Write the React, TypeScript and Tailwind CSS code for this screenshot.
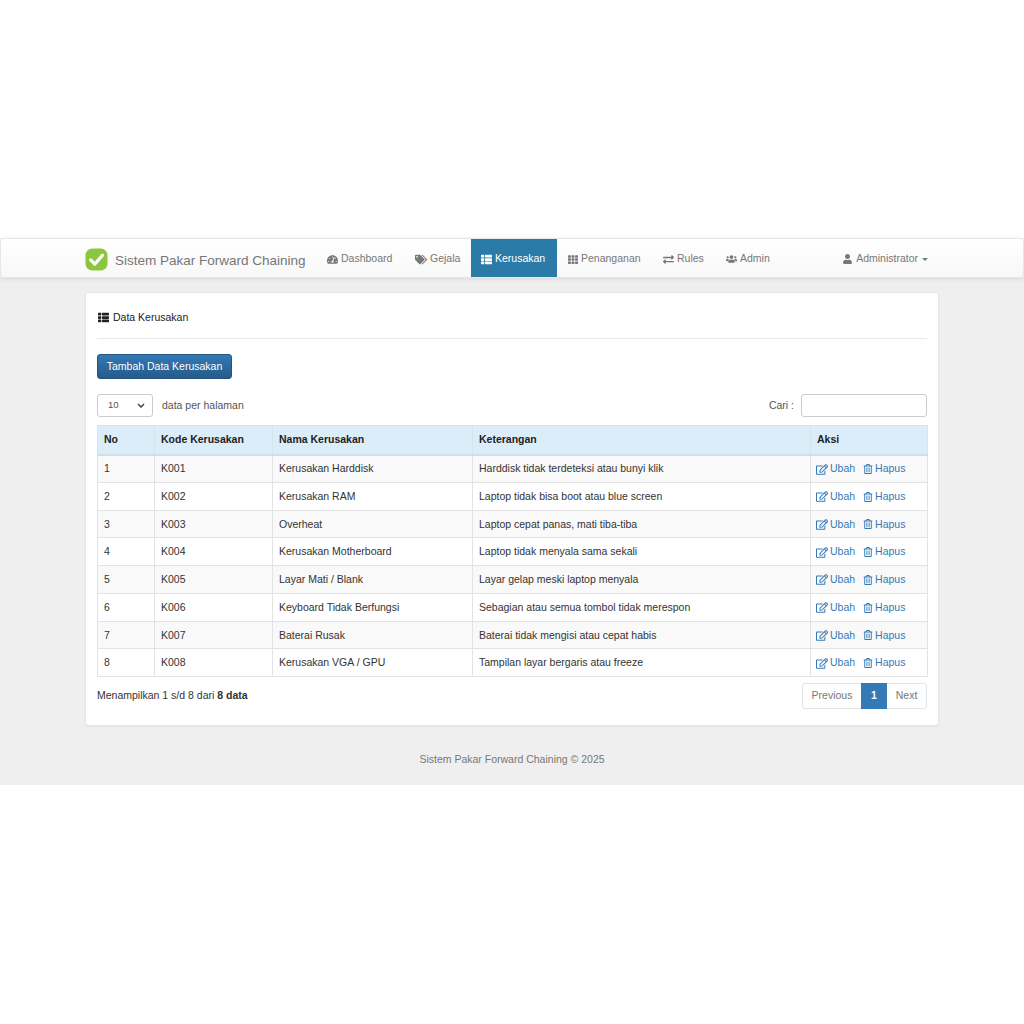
import { FaTachometerAlt, FaTags, FaThList, FaTh, FaExchangeAlt, FaUsers, FaUser, FaRegEdit, FaRegTrashAlt } from "react-icons/fa";
import type { IconType } from "react-icons";

const NAV: { label: string; icon: IconType; active?: boolean; w: string; iconSize: string; pad: string }[] = [
  { label: "Dashboard", icon: FaTachometerAlt, w: "w-[88px]", iconSize: "w-[11px] h-[11px]", pad: "pl-[11px]" },
  { label: "Gejala", icon: FaTags, w: "w-[67px]", iconSize: "w-[12px] h-[11px]", pad: "pl-[11px]" },
  { label: "Kerusakan", icon: FaThList, active: true, w: "w-[86px]", iconSize: "w-[11px] h-[11px]", pad: "pl-[10px]" },
  { label: "Penanganan", icon: FaTh, w: "w-[95px]", iconSize: "w-[10px] h-[11px]", pad: "pl-[11px]" },
  { label: "Rules", icon: FaExchangeAlt, w: "w-[63px]", iconSize: "w-[11px] h-[11px]", pad: "pl-[11px]" },
  { label: "Admin", icon: FaUsers, w: "w-[67px]", iconSize: "w-[11px] h-[12px]", pad: "pl-[11px]" },
];

const ROWS = [
  ["K001", "Kerusakan Harddisk", "Harddisk tidak terdeteksi atau bunyi klik"],
  ["K002", "Kerusakan RAM", "Laptop tidak bisa boot atau blue screen"],
  ["K003", "Overheat", "Laptop cepat panas, mati tiba-tiba"],
  ["K004", "Kerusakan Motherboard", "Laptop tidak menyala sama sekali"],
  ["K005", "Layar Mati / Blank", "Layar gelap meski laptop menyala"],
  ["K006", "Keyboard Tidak Berfungsi", "Sebagian atau semua tombol tidak merespon"],
  ["K007", "Baterai Rusak", "Baterai tidak mengisi atau cepat habis"],
  ["K008", "Kerusakan VGA / GPU", "Tampilan layar bergaris atau freeze"],
];

function Logo() {
  return (
    <svg width="23" height="23" viewBox="0 0 24 24" className="shrink-0 mt-[3px]">
      <rect x="0.5" y="0.5" width="23" height="23" rx="7" fill="#8cc63f" />
      <path d="M6 12.5l4.2 4.3L18.2 7.5" fill="none" stroke="#fff" strokeWidth="3.4" strokeLinecap="round" strokeLinejoin="round" />
    </svg>
  );
}

export default function App() {
  return (
    <div className="font-['Liberation_Sans',Arial,sans-serif] text-[10.5px] text-[#333] bg-white min-h-[1024px] pt-[238px]">
      <div className="bg-[#efefef] h-[547px]">
        <nav className="h-[40px] border border-[#e7e7e7] rounded-[3px] bg-gradient-to-b from-white to-[#f8f8f8] shadow-[0_1px_4px_rgba(0,0,0,0.1)] flex pl-[84px] pr-[85px]">
          <div className="flex items-center gap-[7px] w-[231px] shrink-0">
            <Logo />
            <span className="text-[13.5px] text-[#777] whitespace-nowrap pt-[6px]">Sistem Pakar Forward Chaining</span>
          </div>
          <div className="flex flex-1">
            {NAV.map((n) => {
              const Icon = n.icon;
              return (
                <div
                  key={n.label}
                  className={`${n.w} ${n.pad} flex items-center justify-start gap-[3px] pt-[2px] whitespace-nowrap ${
                    n.active ? "bg-[#2a7ba8] text-white" : "text-[#777]"
                  }`}
                >
                  <Icon className={`${n.iconSize} shrink-0`} />
                  {n.label}
                </div>
              );
            })}
            <div className="ml-auto mr-[10px] flex items-center gap-[3px] pt-[2px] text-[#777]">
              <FaUser className="w-[9px] h-[10px]" />
              <span className="ml-[1px] mr-[1px]">Administrator</span>
              <span className="w-0 h-0 border-x-[3.5px] border-x-transparent border-t-[3.5px] border-t-[#777]" />
            </div>
          </div>
        </nav>

        <main className="mx-[85px] mt-[14px] h-[434px] bg-white rounded-[4px] border border-[#e8e8e8] shadow-[0_1px_2px_rgba(0,0,0,0.06)] px-[11px]">
          <div className="h-[46px] border-b border-[#e8e8e8] flex items-center gap-[4px] pl-[1px] pt-[4px] text-[#222]">
            <FaThList className="w-[11px] h-[11px]" />
            Data Kerusakan
          </div>
          <button className="mt-[15px] h-[25px] w-[135px] rounded-[3px] border border-[#245580] bg-gradient-to-b from-[#337ab7] to-[#265a88] text-white text-[10.5px] block">
            Tambah Data Kerusakan
          </button>
          <div className="mt-[14px] flex items-center justify-between h-[24px]">
            <div className="flex items-center gap-[9px]">
              <div className="w-[56px] h-[23px] border border-[#ccc] rounded-[3px] bg-white flex items-center justify-between pl-[10px] pr-[7px] text-[9.5px] text-[#555]">
                10
                <svg width="8" height="5" viewBox="0 0 8 5"><path d="M1 1l3 3 3-3" fill="none" stroke="#444" strokeWidth="1.5" /></svg>
              </div>
              <span className="text-[#555] pt-[2px]">data per halaman</span>
            </div>
            <div className="flex items-center gap-[7px]">
              <span className="text-[#555] pt-[2px]">Cari :</span>
              <input className="w-[126px] h-[23px] border border-[#ccc] rounded-[3px] bg-white" />
            </div>
          </div>

          <table className="mt-[8px] w-[830px] table-fixed border-collapse">
            <colgroup>
              <col className="w-[57px]" />
              <col className="w-[118px]" />
              <col className="w-[200px]" />
              <col className="w-[338px]" />
              <col className="w-[117px]" />
            </colgroup>
            <thead>
              <tr className="bg-[#dbedf9] h-[29px] text-[#222]">
                {["No", "Kode Kerusakan", "Nama Kerusakan", "Keterangan", "Aksi"].map((h) => (
                  <th key={h} className="border border-[#d5e5ef] border-b-2 border-b-[#cfdfe9] px-[6px] text-left font-bold">
                    {h}
                  </th>
                ))}
              </tr>
            </thead>
            <tbody>
              {ROWS.map((r, i) => (
                <tr key={r[0]} className={`h-[27.75px] ${i % 2 === 0 ? "bg-[#f9f9f9]" : "bg-white"}`}>
                  <td className="border border-[#e3e3e3] px-[6px] pt-px">{i + 1}</td>
                  {r.map((c) => (
                    <td key={c} className="border border-[#e3e3e3] px-[6px] pt-px whitespace-nowrap">{c}</td>
                  ))}
                  <td className="border border-[#e3e3e3] px-[5px] pt-px text-[#337ab7] whitespace-nowrap">
                    <div className="flex items-center">
                      <FaRegEdit className="w-[12px] h-[11px] mr-[2px]" />
                      <span>Ubah</span>
                      <FaRegTrashAlt className="w-[10px] h-[10px] ml-[8px] mr-[2px]" />
                      <span>Hapus</span>
                    </div>
                  </td>
                </tr>
              ))}
            </tbody>
          </table>

          <div className="mt-[6px] flex justify-between">
            <span className="text-[#333] mt-[5px]">Menampilkan 1 s/d 8 dari <b>8 data</b></span>
            <div className="flex h-[26px] border border-[#e3e3e3] rounded-[3px] text-[#777] items-stretch">
              <span className="w-[58px] flex items-center justify-center">Previous</span>
              <span className="w-[26px] bg-[#337ab7] text-white font-bold flex items-center justify-center -my-px">1</span>
              <span className="w-[39px] flex items-center justify-center">Next</span>
            </div>
          </div>
        </main>

        <footer className="mt-[26px] text-center text-[#777]">Sistem Pakar Forward Chaining © 2025</footer>
      </div>
    </div>
  );
}
